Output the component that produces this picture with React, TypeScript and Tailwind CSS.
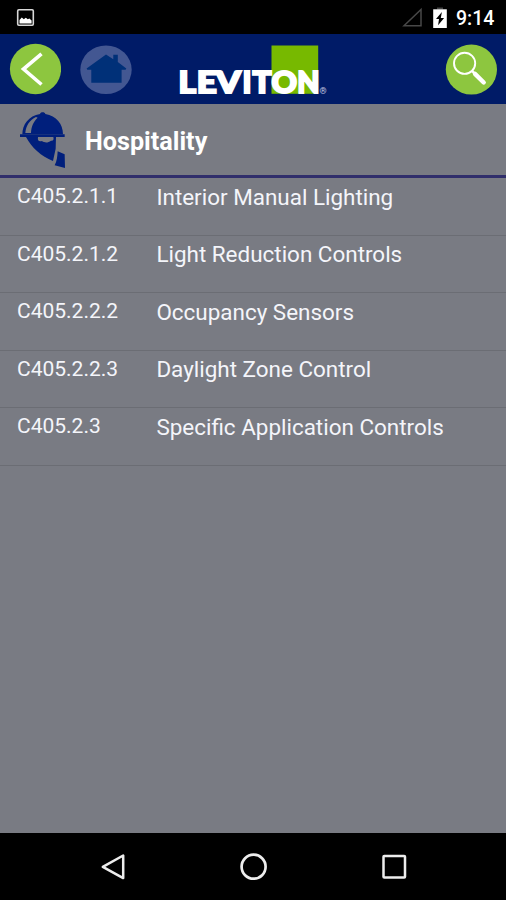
const sections = [
  { code: 'C405.2.1.1', title: 'Interior Manual Lighting' },
  { code: 'C405.2.1.2', title: 'Light Reduction Controls' },
  { code: 'C405.2.2.2', title: 'Occupancy Sensors' },
  { code: 'C405.2.2.3', title: 'Daylight Zone Control' },
  { code: 'C405.2.3', title: 'Specific Application Controls' },
];

function StatusBar() {
  return (
    <div className="flex h-[34px] shrink-0 items-center bg-black pl-4 pr-[9px] text-white">
      <svg className="h-[19px] w-[19px]" viewBox="0 0 19 19">
        <rect x="1.7" y="1.7" width="15.6" height="15.6" rx="1.2" fill="none" stroke="#d8d8d8" strokeWidth="1.6" />
        <path d="M3.5 15.5V12l2.3-2.5 2 1.8 2-1.5 2 1.4 1.6-.8 2.2 2.2v2.9z" fill="#fff" />
      </svg>
      <svg className="ml-auto h-[20px] w-[22px]" viewBox="0 0 22 20">
        <path d="M2 18.8L19 2.5V18.8z" fill="none" stroke="#484848" strokeWidth="1.5" />
      </svg>
      <svg className="ml-[8px] h-[22px] w-[16px]" viewBox="0 0 16 22">
        <path d="M5 1.5h6v2H5z" fill="#444" />
        <path d="M1.2 3.3h13.6V22H1.2z" fill="#fff" />
        <path d="M9.9 6L4 13h3l-.9 6.2 6-7.2H8.8z" fill="#000" />
      </svg>
      <span className="ml-[8px] w-[41px] whitespace-nowrap pt-[3px] text-[19.5px] font-medium leading-6">9:14</span>
    </div>
  );
}

function Logo() {
  return (
    <svg className="h-[60px] w-[160px]" viewBox="0 0 160 60">
      <rect x="95.5" y="6.5" width="46.7" height="48.3" fill="#77b900" />
      <text
        y="53.6"
        className="fill-white stroke-white font-['Lato',sans-serif] text-[29.5px] font-black"
        strokeWidth="2"
      >
        <tspan x="2.6" textLength="17.5" lengthAdjust="spacingAndGlyphs">L</tspan>
        <tspan x="20.8" textLength="20" lengthAdjust="spacingAndGlyphs">E</tspan>
        <tspan x="40" textLength="24.8" lengthAdjust="spacingAndGlyphs">V</tspan>
        <tspan x="66.6">I</tspan>
        <tspan x="76.5" textLength="19" lengthAdjust="spacingAndGlyphs">T</tspan>
        <tspan x="95.4" textLength="25.5" lengthAdjust="spacingAndGlyphs">O</tspan>
        <tspan x="121.2" textLength="22.3" lengthAdjust="spacingAndGlyphs">N</tspan>
      </text>
      <text x="143.6" y="54.5" className="fill-[#c5cbe0] font-['Roboto',sans-serif] text-[9px]">
        ®
      </text>
    </svg>
  );
}

function Header() {
  return (
    <header className="flex h-[70px] shrink-0 items-center bg-[#001b67] pl-[9px] pr-[9px]">
      <button aria-label="Back">
        <svg className="h-[52px] w-[52px]" viewBox="0 0 52 52">
          <ellipse cx="26.5" cy="26" rx="25.6" ry="25.2" fill="#8dc63f" />
          <path d="M32.5 10.8L14.5 26l18 15.5" fill="none" stroke="#fff" strokeWidth="3.6" />
        </svg>
      </button>
      <button aria-label="Home" className="ml-[19px]">
        <svg className="h-[52px] w-[52px]" viewBox="0 0 52 52">
          <ellipse cx="26" cy="26.7" rx="25.7" ry="24.3" fill="#435792" />
          <path d="M26 11.5l7.3 4.7v-4.4h4.5v7.2l8.5 6.5-.7 1.2h-4v13.1H11.3V26.7h-4l-.7-1.2z" fill="#003078" />
        </svg>
      </button>
      <div className="ml-[44px]">
        <Logo />
      </div>
      <button aria-label="Search" className="ml-auto">
        <svg className="h-[52px] w-[52px]" viewBox="0 0 52 52">
          <ellipse cx="26.4" cy="26.6" rx="25.6" ry="25" fill="#8dc63f" />
          <circle cx="19.6" cy="20.3" r="10.6" fill="none" stroke="#fff" strokeWidth="1.9" />
          <path d="M27 27.8l3 3" stroke="#fff" strokeWidth="2.4" />
          <path d="M30 30.9l8.7 8.6" stroke="#fff" strokeWidth="4.4" strokeLinecap="round" />
        </svg>
      </button>
    </header>
  );
}

function CategoryBar() {
  return (
    <div className="flex h-[74px] shrink-0 border-b-[3px] border-[#302e6b] pl-[10px]">
      <svg className="mt-px h-[70px] w-[70px]" viewBox="0 0 210 210" fill="#001f7c">
        <path d="M37 88C37 58 56 33 90 27c1-7 15-7 16 0 33 5 53 30 53 61z" />
        <path d="M46 84c2-22 13-39 32-48l5 2c-13 12-19 27-20 46z" fill="#797b83" />
        <path d="M30 88h134v8H30z" />
        <path d="M48 96h36c-2 11 3 15 12 12 8 6 18 6 27-1 7 1 9-4 7-11h8l-1 35-8 37C93 154 66 129 48 96z" />
        <path d="M143 139l21 9 1 41-31-8c7-13 8-27 9-42z" />
      </svg>
      <h1 className="ml-[5px] pt-[22px] text-[25.2px] font-bold leading-8 text-white">Hospitality</h1>
    </div>
  );
}

function NavBar() {
  return (
    <nav className="flex h-[67px] shrink-0 items-center justify-between bg-black pl-[98px] pr-[97px]">
      <svg className="h-[30px] w-[30px]" viewBox="0 0 30 30" fill="none" stroke="#ededed" strokeWidth="2.5">
        <path d="M25.2 3.5v22.6L4.8 14.8z" strokeLinejoin="round" />
      </svg>
      <svg className="h-[30px] w-[30px]" viewBox="0 0 30 30" fill="none" stroke="#ededed" strokeWidth="2.7">
        <circle cx="14.6" cy="14.7" r="12" />
      </svg>
      <svg className="h-[30px] w-[30px]" viewBox="0 0 30 30" fill="none" stroke="#ededed" strokeWidth="2.5">
        <rect x="4.5" y="4" width="21.5" height="21.5" rx="0.8" />
      </svg>
    </nav>
  );
}

export default function App() {
  return (
    <div className="flex h-[900px] w-[506px] flex-col overflow-hidden bg-[#797b83] font-['Roboto',sans-serif]">
      <StatusBar />
      <Header />
      <CategoryBar />
      <ul className="grow">
        {sections.map((section) => (
          <li key={section.code} className="flex h-[57.5px] border-b border-[#6b6d74] pl-[17px] text-[#f4f5fa]">
            <span className="w-[139.4px] pt-[4.4px] text-[21px] leading-7">{section.code}</span>
            <span className="pt-[4.5px] text-[22.45px] leading-7">{section.title}</span>
          </li>
        ))}
      </ul>
      <NavBar />
    </div>
  );
}
